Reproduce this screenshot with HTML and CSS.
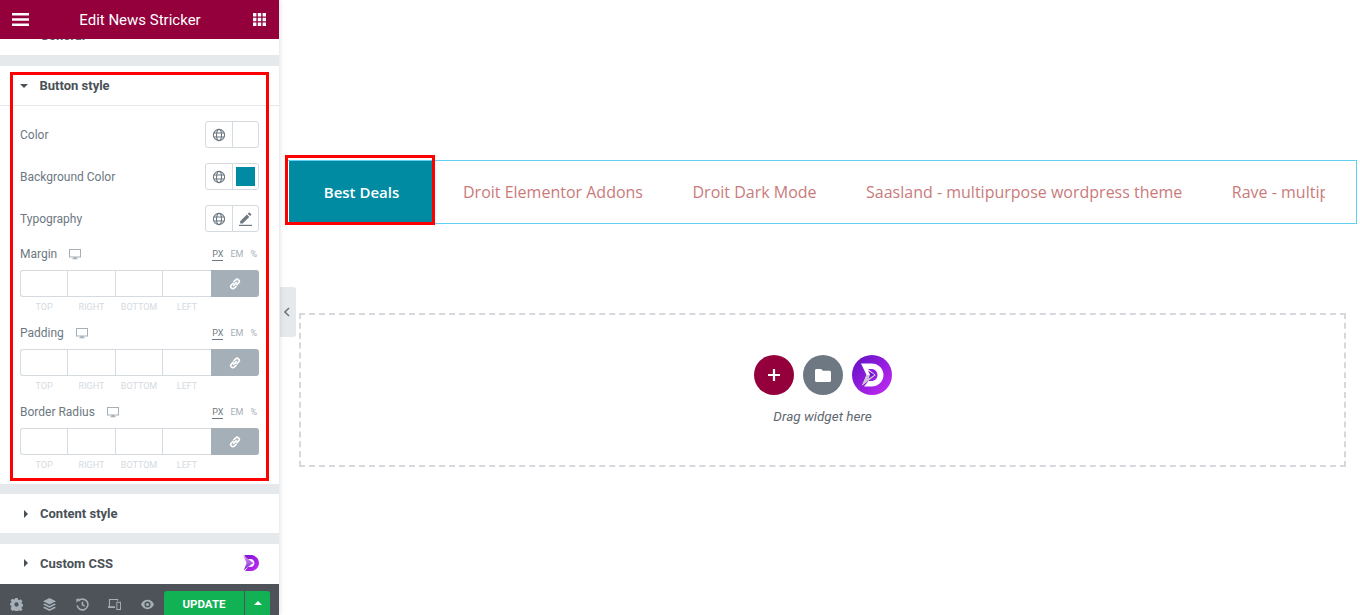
FILE: index.html
```html
<!DOCTYPE html>
<html lang="en">
<head>
<meta charset="utf-8">
<title>Edit News Stricker</title>
<link rel="stylesheet" href="styles.css">
</head>
<body>
<svg class="defs" width="0" height="0" aria-hidden="true">
  <defs>
    <symbol id="globe" viewBox="0 0 14 14"><g fill="none" stroke="currentColor" stroke-width="1.1"><circle cx="7" cy="7" r="5.6"/><ellipse cx="7" cy="7" rx="2.5" ry="5.6"/><path d="M1.6 5h10.8M1.600 9h10.800"/></g></symbol>
    <symbol id="monitor" viewBox="0 0 12 11"><path fill="currentColor" d="M0 0h12v8.400H7.400v.9h1.200v.9H3.400v-.9h1.200v-.9H0zM1 1v6.400h10V1z"/></symbol>
    <symbol id="link" viewBox="0 0 12 12"><g fill="none" stroke="currentColor" stroke-width="1.7" stroke-linecap="round"><path d="M5 3.600 6.600 2a2.100 2.100 0 0 1 3 3L8 6.600"/><path d="M7 8.400 5.400 10a2.100 2.100 0 0 1-3-3L4 5.400"/><path d="M4.600 7.400l2.800-2.800"/></g></symbol>
    <linearGradient id="dg" x1="0" y1="0" x2="1" y2="1"><stop offset="0" stop-color="#7a14d0"/><stop offset="1" stop-color="#c72cf5"/></linearGradient>
    <linearGradient id="dl" x1="0" y1="0" x2="0" y2="1"><stop offset="0" stop-color="#e49af5"/><stop offset="1" stop-color="#7a1fd8"/></linearGradient>
  </defs>
</svg>

<div class="app">
  <aside class="panel">
    <header class="panel-head">
      <svg class="head-icon" viewBox="0 0 17 13"><path fill="#fff" d="M0 0h17v2.400H0zM0 5.300h17v2.400H0zM0 10.600h17V13H0z"/></svg>
      <h1 class="head-title">Edit News Stricker</h1>
      <svg class="head-grid" viewBox="0 0 13 13"><path fill="#fff" d="M0 0h3.400v3.400H0zM4.800 0h3.400v3.400H4.800zM9.600 0H13v3.400H9.600zM0 4.800h3.400v3.400H0zM4.800 4.800h3.400v3.400H4.800zM9.600 4.800H13v3.400H9.600zM0 9.600h3.400V13H0zM4.800 9.600h3.400V13H4.800zM9.600 9.600H13V13H9.600z"/></svg>
    </header>

    <div class="panel-body">
      <div class="stub"><span class="stub-text">General</span></div>

      <section class="section section-open">
        <div class="section-head head-open"><span class="caret-down"></span><span class="section-title">Button style</span></div>
        <div class="controls">
          <div class="row-color">
            <span class="label">Color</span>
            <div class="group">
              <span class="group-cell"><svg class="globe"><use href="#globe"/></svg></span>
              <span class="group-cell"></span>
            </div>
          </div>
          <div class="row-color">
            <span class="label">Background Color</span>
            <div class="group">
              <span class="group-cell"><svg class="globe"><use href="#globe"/></svg></span>
              <span class="group-cell"><span class="swatch"></span></span>
            </div>
          </div>
          <div class="row-color">
            <span class="label">Typography</span>
            <div class="group">
              <span class="group-cell"><svg class="globe"><use href="#globe"/></svg></span>
              <span class="group-cell">
                <svg class="pencil" viewBox="0 0 13 14"><path fill="#6d7882" d="M1.200 9.200 7.900 2.500l2.400 2.400-6.700 6.700H1.200zM8.700 1.700l1-1a.8.8 0 0 1 1.100 0l1.300 1.300a.8.8 0 0 1 0 1.100l-1 1z"/><path fill="#6d7882" d="M0 12.800h13V14H0z"/></svg>
              </span>
            </div>
          </div>

          <div class="dim">
            <div class="dim-top">
              <span class="label">Margin</span><svg class="monitor"><use href="#monitor"/></svg>
              <span class="units"><span class="unit unit-on">PX</span><span class="unit">EM</span><span class="unit">%</span></span>
            </div>
            <div class="dim-inputs">
              <span class="dim-cell"></span><span class="dim-cell"></span><span class="dim-cell"></span><span class="dim-cell"></span>
              <span class="dim-link"><svg class="link"><use href="#link"/></svg></span>
            </div>
            <div class="dim-labels"><span>TOP</span><span>RIGHT</span><span>BOTTOM</span><span>LEFT</span></div>
          </div>

          <div class="dim">
            <div class="dim-top">
              <span class="label">Padding</span><svg class="monitor"><use href="#monitor"/></svg>
              <span class="units"><span class="unit unit-on">PX</span><span class="unit">EM</span><span class="unit">%</span></span>
            </div>
            <div class="dim-inputs">
              <span class="dim-cell"></span><span class="dim-cell"></span><span class="dim-cell"></span><span class="dim-cell"></span>
              <span class="dim-link"><svg class="link"><use href="#link"/></svg></span>
            </div>
            <div class="dim-labels"><span>TOP</span><span>RIGHT</span><span>BOTTOM</span><span>LEFT</span></div>
          </div>

          <div class="dim">
            <div class="dim-top">
              <span class="label">Border Radius</span><svg class="monitor"><use href="#monitor"/></svg>
              <span class="units"><span class="unit unit-on">PX</span><span class="unit">EM</span><span class="unit">%</span></span>
            </div>
            <div class="dim-inputs">
              <span class="dim-cell"></span><span class="dim-cell"></span><span class="dim-cell"></span><span class="dim-cell"></span>
              <span class="dim-link"><svg class="link"><use href="#link"/></svg></span>
            </div>
            <div class="dim-labels"><span>TOP</span><span>RIGHT</span><span>BOTTOM</span><span>LEFT</span></div>
          </div>
        </div>
        <div class="red-box red-panel"></div>
      </section>

      <section class="section">
        <div class="section-head"><span class="caret-right"></span><span class="section-title">Content style</span></div>
      </section>
      <section class="section section-last">
        <div class="section-head"><span class="caret-right"></span><span class="section-title">Custom CSS</span>
          <svg class="d-badge" viewBox="0 0 24 24"><path fill="url(#dg)" d="M2 0h9.500C18.500 0 24 5.200 24 12s-5.500 12-12.500 12H3l4.500-6h4c3.300 0 5.700-2.700 5.700-6s-2.400-6-5.700-6H5.500z"/><path fill="url(#dl)" d="M0 0 15.500 12 1 23 5.500 12z"/></svg>
        </div>
      </section>
    </div>

    <footer class="panel-foot">
      <div class="foot-icons">
        <svg class="foot-icon" viewBox="0 0 14 14"><path fill="#a4afb7" fill-rule="evenodd" d="M5.700 0h2.600l.4 1.800 1.300.6 1.600-1 1.800 1.900-1 1.500.5 1.300 1.800.4v2.600l-1.800.4-.5 1.300 1 1.600-1.800 1.800-1.600-1-1.300.5-.4 1.800H5.700l-.4-1.800-1.300-.5-1.600 1L.6 11l1-1.600-.5-1.300L-.7 7.700V5.700l1.800-.4.500-1.300-1-1.500L2.400 .7l1.600 1 1.300-.6zM7 4.700a2.300 2.300 0 1 0 0 4.600 2.300 2.300 0 0 0 0-4.600z"/></svg>
        <svg class="foot-icon" viewBox="0 0 14 14"><path fill="#a4afb7" d="M7 0l7 3.500L7 7 0 3.500zM1.800 6 7 8.600 12.200 6 14 7l-7 3.500L0 7zM1.800 9.400 7 12l5.200-2.600L14 10.400 7 14l-7-3.600z"/></svg>
        <svg class="foot-icon" viewBox="0 0 14 14"><g fill="none" stroke="#a4afb7" stroke-width="1.700"><path d="M2.600 3.200A5.800 5.800 0 1 1 1.300 8"/><path d="M7 4v3.400l2.400 1.400"/></g><path fill="#a4afb7" d="M.4 .8H4.600L.4 5z"/></svg>
        <svg class="foot-icon" viewBox="0 0 14 12"><path fill="#a4afb7" d="M1 0h10v2H9.800V1.200H2.200V8H7.500v1.800H0V8h1zM9 3h5v9H9zm1 1.200v6.600h3V4.200z"/></svg>
        <svg class="foot-icon" viewBox="0 0 14 10"><path fill="#a4afb7" fill-rule="evenodd" d="M7 0c3.200 0 5.800 2.200 7 5-1.200 2.800-3.800 5-7 5S1.200 7.800 0 5c1.200-2.800 3.800-5 7-5zm0 1.700a3.300 3.300 0 1 0 0 6.600 3.300 3.300 0 0 0 0-6.600zM7 3.300a1.700 1.700 0 1 1 0 3.400 1.700 1.700 0 0 1 0-3.400z"/></svg>
      </div>
      <div class="foot-actions">
        <span class="btn-update">UPDATE</span>
        <span class="btn-more"><span class="caret-up"></span></span>
      </div>
    </footer>
  </aside>

  <main class="canvas">
    <span class="collapse"><svg class="chev" viewBox="0 0 6 10"><path fill="none" stroke="#6d7882" stroke-width="1.600" d="M5 1 1 5l4 4"/></svg></span>

    <div class="ticker">
      <div class="ticker-label">Best Deals</div>
      <div class="ticker-track">
        <span class="ticker-item">Droit Elementor Addons</span>
        <span class="ticker-item">Droit Dark Mode</span>
        <span class="ticker-item">Saasland - multipurpose wordpress theme</span>
        <span class="ticker-item">Rave - multipurpose wordpress theme</span>
      </div>
      <div class="red-box red-ticker"></div>
    </div>

    <div class="dropzone">
      <div class="drop-buttons">
        <span class="drop-btn drop-add"><svg class="plus" viewBox="0 0 12 12"><path fill="#fff" d="M4.900 0h2.200v4.900H12v2.200H7.100V12H4.900V7.100H0V4.900h4.900z"/></svg></span>
        <span class="drop-btn drop-folder"><svg class="folder" viewBox="0 0 16 13"><path fill="#fff" d="M1.500 0h4.700l1.600 1.800h6.700c.8 0 1.500.7 1.500 1.500v8.200c0 .8-.7 1.500-1.500 1.500h-13C.7 13 0 12.300 0 11.500v-10C0 .7.700 0 1.500 0z"/></svg></span>
        <span class="drop-btn drop-droit"><svg class="droit" viewBox="0 0 24 24"><path fill="#fff" d="M1 .5h10.500C18.200.5 23.500 5.400 23.500 12s-5.300 11.500-12 11.500H4l4.500-5.500h3c3.400 0 6-2.600 6-6s-2.600-6-6-6H6z"/><path fill="#fff" d="M1 .5 15.500 12 2 22.500 6.500 12z"/><path fill="#c9c6d2" d="M6.500 12 15.500 12 2 22.500z"/><path fill="#7415d4" d="M8 7.500 14.500 11.800 8.700 15.500 10 11.800z"/></svg></span>
      </div>
      <p class="drop-text">Drag widget here</p>
    </div>
  </main>
</div>
</body>
</html>
```

FILE: styles.css
```css
* { box-sizing: border-box; }
html, body { margin: 0; padding: 0; height: 615px; overflow: hidden; background: #fff; }
body { font-family: Roboto, "Liberation Sans", sans-serif; }
.defs { position: absolute; }

.app { display: flex; height: 615px; }

/* Panel */
.panel { position: relative; z-index: 2; display: flex; flex-direction: column; flex: 0 0 279px; width: 279px; height: 615px; background: #e6e9ec; box-shadow: 1px 0 5px rgba(0,0,0,.12); }
.panel-head { flex: 0 0 39px; display: flex; align-items: center; background: #93003c; color: #fff; padding: 0 13px 0 12px; }
.head-icon { width: 17px; height: 13px; }
.head-title { flex: 1; margin: 0; text-align: center; font-size: 15px; font-weight: 400; line-height: 38px; padding-right: 2px; }
.head-grid { width: 13px; height: 13px; }

.panel-body { flex: 1; display: flex; flex-direction: column; min-height: 0; }
.stub { flex: 0 0 16px; background: #fff; overflow: hidden; padding-left: 40px; margin-bottom: 11px; }
.stub-text { display: block; margin-top: -10px; font-size: 13px; font-weight: 700; line-height: 14px; color: #556068; }

.section { position: relative; background: #fff; margin-bottom: 11px; }
.section-open { margin-bottom: 10px; }
.section-last { margin-bottom: 0; height: 40px; }
.section-head { display: flex; align-items: center; height: 39px; padding-left: 24px; position: relative; }
.head-open { height: 40px; padding-left: 20px; border-bottom: 1px solid #e6e9ec; }
.section-last .section-head { height: 38px; }
.section-title { font-size: 13px; font-weight: 700; color: #495157; margin-left: 12px; }
.head-open .section-title { margin-left: 11.500px; }
.caret-down { width: 0; height: 0; border-left: 4.500px solid transparent; border-right: 4.500px solid transparent; border-top: 4.500px solid #495157; }
.caret-right { width: 0; height: 0; border-top: 4px solid transparent; border-bottom: 4px solid transparent; border-left: 4px solid #495157; }
.d-badge { position: absolute; left: 243px; top: 11px; width: 16px; height: 16px; }

.controls { padding: 15px 20px 0; height: 378px; }
.row-color { display: flex; align-items: center; justify-content: space-between; height: 27px; margin-bottom: 15px; }
.label { font-size: 12px; color: #6d7882; line-height: 14px; }
.group { display: flex; width: 54px; height: 27px; border: 1px solid #d5dadf; border-radius: 3px; }
.group-cell { flex: 1; display: flex; align-items: center; justify-content: center; }
.group-cell + .group-cell { border-left: 1px solid #d5dadf; }
.globe { width: 14px; height: 14px; color: #6d7882; }
.swatch { width: 19px; height: 19px; background: #008ba3; }
.pencil { width: 13px; height: 14px; }

.dim { height: 79px; }
.dim-top { display: flex; align-items: center; height: 14px; margin-bottom: 9px; }
.monitor { width: 12px; height: 11px; margin-left: 12px; color: #a4afb7; }
.units { margin-left: auto; margin-right: 2px; margin-top: 2px; display: flex; gap: 7px; }
.unit { font-size: 9px; color: #a4afb7; line-height: 11px; }
.unit-on { color: #6d7882; border-bottom: 1px solid #6d7882; }
.dim-inputs, .dim-labels { display: grid; grid-template-columns: 47px 48px 47px 49px 48px; }
.dim-inputs { height: 27px; }
.dim-cell { border: 1px solid #d5dadf; border-right: 0; }
.dim-cell:first-child { border-radius: 3px 0 0 3px; }
.dim-link { display: flex; align-items: center; justify-content: center; background: #a4afb7; border-radius: 0 3px 3px 0; color: #fff; }
.link { width: 12px; height: 12px; }
.dim-labels { margin-top: 5px; }
.dim-labels span { padding-left: 1px; text-align: center; font-size: 9px; line-height: 11px; color: #d5dadf; }

.red-box { position: absolute; border: 3px solid #f00; pointer-events: none; z-index: 3; }
.red-panel { left: 10px; top: 6px; width: 259px; height: 409px; }

/* Footer */
.panel-foot { flex: 0 0 31px; display: flex; align-items: flex-start; background: #4d5359; padding: 7px 9px 0 10px; height: 31px; }
.foot-icons { display: flex; align-items: center; height: 24px; gap: 19.750px; padding-top: 2px; }
.foot-icon { width: 13px; height: 13px; }
.foot-actions { display: flex; margin-left: auto; height: 24px; }
.btn-update { width: 80px; background: #10b254; color: #fff; font-size: 11.500px; font-weight: 700; line-height: 26px; text-align: center; border-radius: 3px 0 0 0; }
.btn-more { width: 25px; margin-left: 1px; background: #10b254; border-radius: 0 3px 0 0; display: flex; align-items: center; justify-content: center; }
.caret-up { width: 0; height: 0; border-left: 4px solid transparent; border-right: 4px solid transparent; border-bottom: 4px solid #fff; }

/* Canvas */
.canvas { position: relative; flex: 1; min-width: 0; padding: 160px 3px 0 7px; }
.collapse { position: absolute; left: 1px; top: 287px; width: 16px; height: 50px; display: flex; align-items: center; padding-left: 4px; background: #e6e9ec; border-radius: 0 3px 3px 0; }
.chev { width: 6px; height: 10px; }

.ticker { position: relative; display: flex; height: 64px; border: 1px solid #62d0f2; padding: 0 31px 0 2px; font-family: "Open Sans", sans-serif; }
.ticker-label { flex: 0 0 145px; display: flex; align-items: center; justify-content: center; background: #008ba3; color: #fff; font-size: 15px; font-weight: 600; }
.ticker-track { flex: 1; min-width: 0; display: flex; align-items: center; overflow: hidden; white-space: nowrap; padding-left: 29px; gap: 49.500px; }
.ticker-item { font-size: 16px; color: #c97b7b; flex: none; }
.red-ticker { left: -2px; top: -6px; width: 150px; height: 70px; }

.dropzone { margin: 89px 11px 0 13px; height: 154px; border: 2px dashed #d5d8dc; display: flex; flex-direction: column; align-items: center; padding-top: 40px; }
.drop-buttons { display: flex; gap: 9px; }
.drop-btn { width: 40px; height: 40px; border-radius: 50%; display: flex; align-items: center; justify-content: center; }
.drop-add { background: #93003c; }
.drop-folder { background: #6d7882; }
.drop-droit { background: linear-gradient(135deg, #5e0fc4, #c72cf5); }
.plus { width: 12px; height: 12px; }
.folder { width: 16px; height: 13px; }
.droit { width: 24px; height: 24px; }
.drop-text { margin: 14px 0 0; font-size: 13.500px; font-style: italic; color: #5f6870; line-height: 15px; }
```
